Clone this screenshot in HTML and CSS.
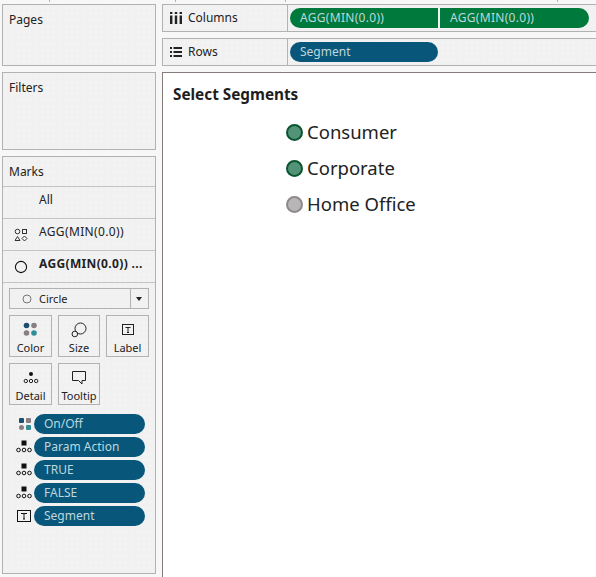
FILE: index.html
```html
<!DOCTYPE html>
<html lang="en">
<head>
    <meta charset="UTF-8">
    <title>Select Segments</title>
    <link rel="stylesheet" href="styles.css">
</head>
<body>
<div class="ticks"><span></span><span></span><span></span><span></span></div>
<div class="app">
    <div class="side">
        <div class="card pages"><div class="card-title">Pages</div></div>
        <div class="card filters"><div class="card-title">Filters</div></div>
        <div class="card marks">
            <div class="card-title marks-title">Marks</div>
            <div class="layer"><span class="layer-icon"></span><span class="layer-text">All</span></div>
            <div class="layer layer-agg">
                <span class="layer-icon">
                    <svg width="14" height="14" viewBox="0 0 14 14" fill="none" stroke="#333"><circle cx="3.5" cy="3.5" r="2.3"/><rect x="8.5" y="1.5" width="4" height="4"/><path d="M3.5 8.5l2.5 4h-5z"/><path d="M10.5 8l2.5 2.5-2.5 2.5-2.5-2.5z"/></svg>
                </span><span class="layer-text">AGG(MIN(0.0))</span>
            </div>
            <div class="layer layer-agg layer-bold">
                <span class="layer-icon">
                    <svg width="14" height="14" viewBox="0 0 14 14" fill="none" stroke="#111" stroke-width="1.1"><circle cx="7" cy="7" r="5.6"/></svg>
                </span><span class="layer-text">AGG(MIN(0.0)) ...</span>
            </div>
            <div class="marks-body">
                <div class="mark-select">
                    <span class="mark-type">
                        <svg width="10" height="10" viewBox="0 0 10 10" fill="none" stroke="#777"><circle cx="5" cy="5" r="4"/></svg>
                        Circle
                    </span>
                    <span class="mark-arrow"></span>
                </div>
                <div class="mark-buttons">
                    <div class="mark-btn">
                        <svg width="16" height="16" viewBox="0 0 16 16"><circle cx="3.5" cy="3.5" r="2.8" fill="#1d4f6e"/><circle cx="11" cy="3.5" r="2.8" fill="#8a7f7f"/><circle cx="3.5" cy="11" r="2.8" fill="#8a7f7f"/><circle cx="11" cy="11" r="2.8" fill="#2f8f96"/></svg>
                        <span>Color</span>
                    </div>
                    <div class="mark-btn">
                        <svg width="16" height="16" viewBox="0 0 16 16" fill="none" stroke="#222"><circle cx="9.5" cy="6.5" r="5.5"/><circle cx="3.8" cy="12" r="2.8" fill="#f0f0f0"/></svg>
                        <span>Size</span>
                    </div>
                    <div class="mark-btn">
                        <svg width="16" height="16" viewBox="0 0 16 16" fill="none"><rect x="2.5" y="2.5" width="11" height="10" stroke="#222"/><path d="M5.5 5.5h5M8 5.5v5M7 10.5h2" stroke="#222"/></svg>
                        <span>Label</span>
                    </div>
                    <div class="mark-btn">
                        <svg width="16" height="16" viewBox="0 0 16 16" fill="none" stroke="#222"><circle cx="8" cy="4" r="2" fill="#111" stroke="none"/><circle cx="2.8" cy="11" r="1.7"/><circle cx="8" cy="11" r="1.7"/><circle cx="13.2" cy="11" r="1.7"/></svg>
                        <span>Detail</span>
                    </div>
                    <div class="mark-btn">
                        <svg width="16" height="16" viewBox="0 0 16 16" fill="none" stroke="#222"><path d="M1.5 1.5h13v9h-3.5v3.5l-3.5-3.5h-6z"/></svg>
                        <span>Tooltip</span>
                    </div>
                </div>
                <div class="fields">
                    <div class="field">
                        <svg width="14" height="14" viewBox="0 0 14 14"><rect x="1" y="1" width="5" height="5" rx="1" fill="#1d4f6e"/><rect x="8" y="1" width="5" height="5" rx="1" fill="#8a7f7f"/><circle cx="3.5" cy="10.5" r="2.5" fill="#8a7f7f"/><rect x="8" y="8" width="5" height="5" rx="1" fill="#2f8f96"/></svg>
                        <span class="pill pill-blue">On/Off</span>
                    </div>
                    <div class="field">
                        <svg width="16" height="14" viewBox="0 0 16 14" fill="none" stroke="#111"><rect x="6" y="1" width="4" height="4" fill="#111"/><circle cx="2.5" cy="10" r="1.8"/><circle cx="8" cy="10" r="1.8"/><circle cx="13.5" cy="10" r="1.8"/></svg>
                        <span class="pill pill-blue">Param Action</span>
                    </div>
                    <div class="field">
                        <svg width="16" height="14" viewBox="0 0 16 14" fill="none" stroke="#111"><rect x="6" y="1" width="4" height="4" fill="#111"/><circle cx="2.5" cy="10" r="1.8"/><circle cx="8" cy="10" r="1.8"/><circle cx="13.5" cy="10" r="1.8"/></svg>
                        <span class="pill pill-blue">TRUE</span>
                    </div>
                    <div class="field">
                        <svg width="16" height="14" viewBox="0 0 16 14" fill="none" stroke="#111"><rect x="6" y="1" width="4" height="4" fill="#111"/><circle cx="2.5" cy="10" r="1.8"/><circle cx="8" cy="10" r="1.8"/><circle cx="13.5" cy="10" r="1.8"/></svg>
                        <span class="pill pill-blue">FALSE</span>
                    </div>
                    <div class="field">
                        <svg width="16" height="14" viewBox="0 0 16 14" fill="none"><rect x="1.5" y="1.5" width="13" height="11" stroke="#111"/><path d="M5 4.5h6M8 4.5v5.5M7 10h2" stroke="#111"/></svg>
                        <span class="pill pill-blue">Segment</span>
                    </div>
                </div>
            </div>
        </div>
    </div>
    <div class="main">
        <div class="shelf">
            <div class="shelf-label">
                <svg width="14" height="12" viewBox="0 0 14 12" fill="#222"><rect x="1" y="0" width="2.4" height="2"/><rect x="1" y="3.5" width="2.4" height="8.5"/><rect x="5.8" y="0" width="2.4" height="2"/><rect x="5.8" y="3.5" width="2.4" height="8.5"/><rect x="10.6" y="0" width="2.4" height="2"/><rect x="10.6" y="3.5" width="2.4" height="8.5"/></svg>
                Columns
            </div>
            <div class="shelf-pills">
                <span class="pill pill-green pill-left">AGG(MIN(0.0))</span>
                <span class="pill pill-green pill-right">AGG(MIN(0.0))</span>
            </div>
        </div>
        <div class="shelf">
            <div class="shelf-label">
                <svg width="14" height="12" viewBox="0 0 14 12" fill="#222"><rect x="1" y="1" width="2" height="2"/><rect x="4.5" y="1" width="8.5" height="2"/><rect x="1" y="5" width="2" height="2"/><rect x="4.5" y="5" width="8.5" height="2"/><rect x="1" y="9" width="2" height="2"/><rect x="4.5" y="9" width="8.5" height="2"/></svg>
                Rows
            </div>
            <div class="shelf-pills">
                <span class="pill pill-blue pill-row">Segment</span>
            </div>
        </div>
        <div class="view">
            <h1 class="view-title">Select Segments</h1>
            <ul class="legend">
                <li><span class="dot dot-on"></span>Consumer</li>
                <li><span class="dot dot-on"></span>Corporate</li>
                <li><span class="dot dot-off"></span>Home Office</li>
            </ul>
        </div>
    </div>
</div>
</body>
</html>
```

FILE: styles.css
```css
* {
    margin: 0;
    padding: 0;
    box-sizing: border-box;
}

html, body {
    height: 100%;
    overflow: hidden;
}

body {
    background-color: #f7f7f7;
    font-family: "Noto Sans", "Open Sans", sans-serif;
    font-size: 12px;
    color: #222222;
}

.ticks {
    display: grid;
    grid-template-columns: 50px 126px 110px 272px;
    height: 2px;
}

.ticks span {
    border-right: 1px solid #b2b2b2;
}

.app {
    display: flex;
    gap: 6px;
    height: 575px;
    padding: 2px 0 3px 2px;
}

.side {
    width: 154px;
    display: flex;
    flex-direction: column;
    gap: 6px;
}

.card, .shelf {
    border: 1px solid #b2b2b2;
    background-color: #f1f1f1;
    background-image: radial-gradient(#f9f9f9 0.6px, transparent 0.8px);
    background-size: 6px 6px;
}

.card-title {
    padding: 6px 6px 0;
    line-height: 18px;
}

.pages {
    height: 62px;
}

.filters {
    height: 78px;
}

.marks {
    flex: 1;
    display: flex;
    flex-direction: column;
}

.marks-title {
    height: 30px;
    flex-shrink: 0;
    border-bottom: 1px solid #c4c4c4;
}

.layer {
    height: 32px;
    flex-shrink: 0;
    display: flex;
    align-items: center;
    border-bottom: 1px solid #c4c4c4;
}

.layer-icon {
    width: 36px;
    display: flex;
    justify-content: center;
}

.layer-text {
    margin-bottom: 6px;
}

.layer-agg {
    letter-spacing: 0.35px;
}

.layer-bold {
    font-weight: 700;
}

.marks-body {
    padding: 5px 6px;
}

.mark-select {
    height: 21px;
    display: flex;
    border: 1px solid #b2b2b2;
    background-color: #f1f1f1;
}

.mark-type {
    flex: 1;
    display: flex;
    align-items: center;
    gap: 7px;
    padding-left: 12px;
    font-size: 11px;
    border-right: 1px solid #b2b2b2;
}

.mark-arrow {
    width: 17px;
    position: relative;
}

.mark-arrow::after {
    content: "";
    position: absolute;
    left: 5px;
    top: 8px;
    border-left: 3px solid transparent;
    border-right: 3px solid transparent;
    border-top: 4px solid #222222;
}

.mark-buttons {
    display: grid;
    grid-template-columns: 43px 42px 43px;
    gap: 6px;
    margin-top: 6px;
}

.mark-btn {
    height: 42px;
    border: 1px solid #b2b2b2;
    display: flex;
    flex-direction: column;
    align-items: center;
    padding-top: 6px;
    font-size: 11px;
    line-height: 14px;
}

.mark-btn span {
    margin-top: 3px;
}

.fields {
    display: flex;
    flex-direction: column;
    gap: 3px;
    margin-top: 9px;
}

.field {
    display: flex;
    align-items: center;
    justify-content: flex-end;
    gap: 2px;
    padding-right: 4px;
}

.pill {
    display: flex;
    align-items: center;
    height: 20px;
    border-radius: 10px;
    padding: 0 0 1px 10px;
    color: #bcd8de;
    font-size: 12px;
}

.field .pill {
    width: 111px;
}

.pill-blue {
    background-color: #08567a;
}

.pill-green {
    background-color: #00793d;
}

.main {
    flex: 1;
    display: flex;
    flex-direction: column;
    gap: 6px;
    min-width: 0;
    margin-bottom: -3px;
}

.shelf {
    height: 28px;
    flex-shrink: 0;
    display: flex;
    border-right: 0;
}

.shelf-label {
    width: 125px;
    display: flex;
    align-items: center;
    gap: 5px;
    padding: 0 0 1px 6px;
    border-right: 1px solid #b2b2b2;
}

.shelf-pills {
    display: flex;
    align-items: center;
    gap: 2px;
    padding-left: 2px;
}

.pill-left {
    width: 148px;
    border-radius: 10px 0 0 10px;
    letter-spacing: 0.3px;
}

.pill-right {
    width: 149px;
    border-radius: 0 10px 10px 0;
    letter-spacing: 0.3px;
}

.pill-row {
    width: 148px;
}

.view {
    flex: 1;
    background-color: #ffffff;
    border: 1px solid #857b7b;
    border-width: 1px 0 0 1px;
    padding: 11px 10px;
}

.view-title {
    font-size: 15.3px;
    font-weight: 700;
    line-height: 20px;
    color: #1e1e1e;
}

.legend {
    list-style: none;
    margin: 16px 0 0 113px;
    display: flex;
    flex-direction: column;
    gap: 12px;
}

.legend li {
    display: flex;
    align-items: center;
    gap: 4px;
    font-size: 18.5px;
    line-height: 24px;
}

.dot {
    width: 17px;
    height: 17px;
    border-radius: 50%;
    background-size: 2px 2px;
}

.dot-on {
    background-color: #3a8a66;
    background-image: radial-gradient(#6f9e8a 0.6px, transparent 0.8px);
    border: 2px solid #0a5530;
}

.dot-off {
    background-color: #aeaeae;
    background-image: radial-gradient(#c2c2c2 0.6px, transparent 0.8px);
    border: 2px solid #8f8989;
}
```
